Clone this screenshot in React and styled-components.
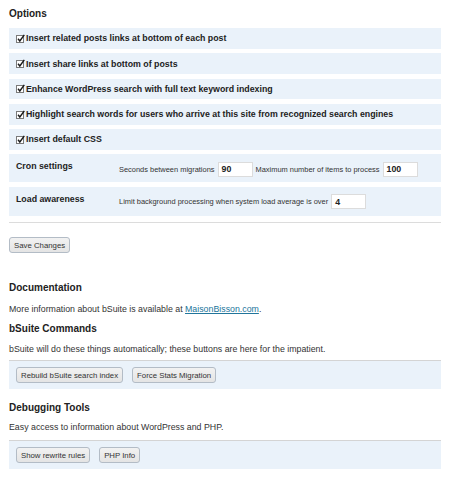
import React from 'react'
import styled, { createGlobalStyle } from 'styled-components'

const GlobalStyle = createGlobalStyle`
  body {
    margin: 0;
    background: #fff;
    font-family: "Liberation Sans", Arial, sans-serif;
    color: #333;
  }
`

const Page = styled.div`
  padding: 8px 9px 0 9px;
  width: 432px;
`

const Heading = styled.h3`
  margin: ${p => p.$top || 0}px 0 0 0;
  font-size: 10px;
  line-height: 12px;
  font-weight: bold;
  color: #222;
`

const Text = styled.p`
  margin: ${p => p.$top || 0}px 0 0 0;
  font-size: 8.8px;
  line-height: 12px;
  color: #333;
`

const Link = styled.a`
  color: #21759b;
  text-decoration: underline;
`

const OptionList = styled.div`
  display: flex;
  flex-direction: column;
  gap: 4.5px;
  margin-top: 8px;
`

const CheckRow = styled.label`
  display: flex;
  align-items: center;
  gap: 1px;
  height: 20.75px;
  padding-left: 7px;
  background: #eaf2fa;
  font-size: 8.8px;
  font-weight: bold;
  color: #222;
`

const Box = styled.svg`
  width: 9px;
  height: 9px;
  flex-shrink: 0;
`

const SettingRow = styled.div`
  display: grid;
  grid-template-columns: 110px 1fr;
  height: ${p => p.$h}px;
  background: #eaf2fa;
`

const SettingLabel = styled.div`
  padding: 6px 0 0 7px;
  font-size: 8.8px;
  line-height: 12px;
  font-weight: bold;
  color: #222;
`

const SettingField = styled.div`
  display: flex;
  align-items: center;
  gap: 3px;
  padding-top: 7px;
  height: 16px;
  font-size: 7.45px;
  color: #333;
`

const NumInput = styled.span`
  display: inline-flex;
  align-items: center;
  box-sizing: border-box;
  width: 35px;
  height: 15px;
  padding-left: 3px;
  background: #fff;
  border: 1px solid #dcdcdc;
  font-size: 8.8px;
  font-weight: bold;
  color: #222;
`

const Divider = styled.div`
  height: 1px;
  background: #dcdcdc;
  margin-top: 6px;
`

const Button = styled.button`
  box-sizing: border-box;
  height: 16px;
  padding: 0 4px;
  border: 1px solid #b3bcc6;
  border-radius: 3px;
  background: linear-gradient(#f2f2f2, #e4e4e4);
  font-family: "Liberation Sans", Arial, sans-serif;
  font-size: 7.8px;
  color: #333;
  cursor: pointer;
`

const SaveWrap = styled.div`
  margin-top: 11px;
`

const ButtonPanel = styled.div`
  display: flex;
  gap: 9px;
  margin-top: ${p => p.$top || 0}px;
  padding: 6px 7px;
  background: #eaf2fa;
  border-top: 1px solid #d4d4d4;
`

const Check = () => (
  <Box viewBox="0 0 9 9">
    <rect x="0.5" y="1.5" width="7" height="7" fill="#fff" stroke="#7a7a7a" />
    <path d="M2 4.8 L3.8 7 L8.3 0.8" fill="none" stroke="#1a1a1a" strokeWidth="1.4" />
  </Box>
)

const options = [
  'Insert related posts links at bottom of each post',
  'Insert share links at bottom of posts',
  'Enhance WordPress search with full text keyword indexing',
  'Highlight search words for users who arrive at this site from recognized search engines',
  'Insert default CSS',
]

export default function App() {
  return (
    <Page>
      <GlobalStyle />
      <Heading>Options</Heading>
      <OptionList>
        {options.map(o => (
          <CheckRow key={o}>
            <Check />
            {o}
          </CheckRow>
        ))}
        <SettingRow $h={28}>
          <SettingLabel>Cron settings</SettingLabel>
          <SettingField>
            Seconds between migrations <NumInput>90</NumInput>
            Maximum number of items to process <NumInput>100</NumInput>
          </SettingField>
        </SettingRow>
        <SettingRow $h={29}>
          <SettingLabel>Load awareness</SettingLabel>
          <SettingField>
            Limit background processing when system load average is over <NumInput>4</NumInput>
          </SettingField>
        </SettingRow>
      </OptionList>
      <Divider />
      <SaveWrap>
        <Button>Save Changes</Button>
      </SaveWrap>

      <Heading $top={29}>Documentation</Heading>
      <Text $top={9}>
        More information about bSuite is available at <Link href="#">MaisonBisson.com</Link>.
      </Text>
      <Heading $top={8}>bSuite Commands</Heading>
      <Text $top={8}>bSuite will do these things automatically; these buttons are here for the impatient.</Text>
      <ButtonPanel $top={5}>
        <Button>Rebuild bSuite search index</Button>
        <Button>Force Stats Migration</Button>
      </ButtonPanel>

      <Heading $top={13}>Debugging Tools</Heading>
      <Text $top={7}>Easy access to information about WordPress and PHP.</Text>
      <ButtonPanel $top={7}>
        <Button>Show rewrite rules</Button>
        <Button>PHP Info</Button>
      </ButtonPanel>
    </Page>
  )
}
